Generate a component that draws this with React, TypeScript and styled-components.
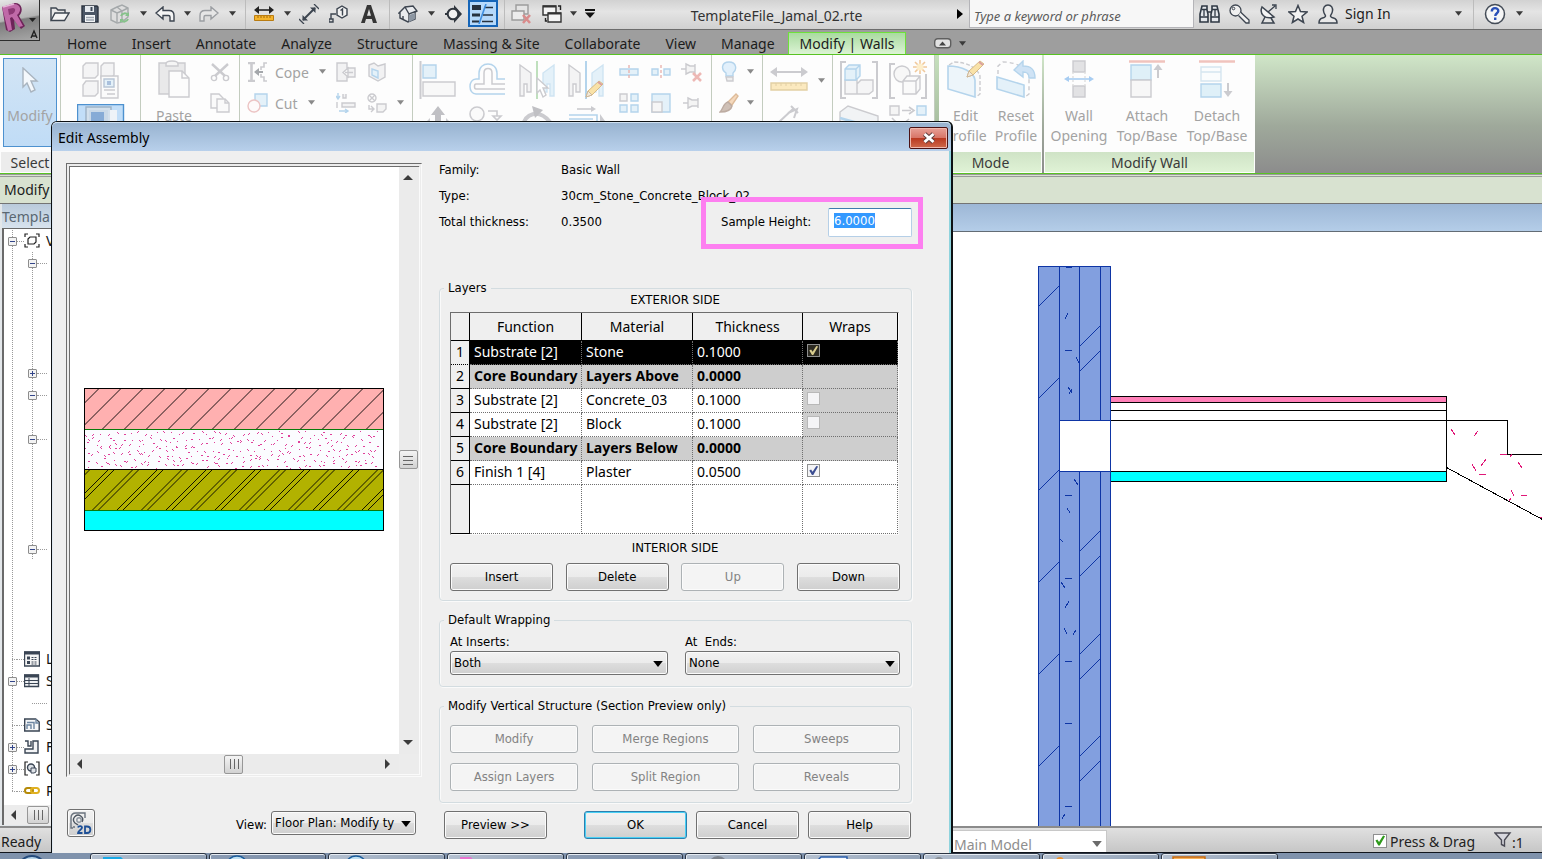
import React, { useEffect, useRef } from "react";
import styled, { createGlobalStyle } from "styled-components";

const ui = '"Noto Sans", "Open Sans", sans-serif';
const dialogFont = '"DejaVu Sans Condensed", "DejaVu Sans", sans-serif';

const GlobalStyle = createGlobalStyle`
  *, *::before, *::after { box-sizing: border-box; }
  body { margin: 0; background: #fff; overflow: hidden; }
  button, input, select { font: inherit; color: inherit; }
  svg { display: block; flex: none; }
`;

const Page = styled.div`
  position: relative;
  display: flex;
  flex-direction: column;
  height: 100vh;
  overflow: hidden;
  font: 14px/20px ${ui};
  color: #1c1c1c;
`;

/* ---------- quick access bar ---------- */

const QuickBar = styled.header`
  display: flex;
  align-items: center;
  height: 30px;
  flex: none;
  padding-left: 44px;
  background: linear-gradient(#d2d2d2, #e4e4e4 40%, #d0d0d0);
  border-bottom: 1px solid #6c6c6c;
`;

const AppButton = styled.button`
  position: absolute;
  left: 0;
  top: 0;
  z-index: 1;
  width: 40px;
  height: 41px;
  padding: 0;
  border: 1px solid #2e2e2e;
  border-width: 0 1px 1px 0;
  background: linear-gradient(170deg, #e6e6e6, #b4b4b4 46%, #7c7c7c 50%, #a8a8a8);
`;

const Slot = styled.button<{ $w: number }>`
  display: flex;
  align-items: center;
  justify-content: center;
  width: ${(p) => p.$w}px;
  height: 27px;
  flex: none;
  margin-bottom: 2px;
  padding: 0;
  border: 0;
  background: none;
`;

const ActiveSlot = styled(Slot)`
  margin: 0 2px 2px;
  background: #b5d9fb;
  border: 2px solid #1565b8;
`;

const Divider = styled.span<{ $w: number }>`
  width: ${(p) => p.$w}px;
  height: 29px;
  flex: none;
  background: linear-gradient(#bcbcbc, #bcbcbc) center / 1px 100% no-repeat;
`;

const FileName = styled.h1`
  flex: 1;
  margin: 0;
  padding-top: 2px;
  font: 14px/20px ${ui};
  text-align: center;
  color: #333;
`;

const Search = styled.input`
  width: 225px;
  height: 28px;
  margin-bottom: 2px;
  padding: 6px 4px 0;
  border: 1px solid #b4b4b8;
  border-top: 0;
  border-radius: 0;
  background: #f7f7f7;
  font: italic 13px/20px ${ui};
  &::placeholder { color: #5c5c5c; opacity: 1; }
`;

const SignIn = styled.button`
  display: flex;
  align-items: center;
  justify-content: space-between;
  width: 124px;
  margin: 0 4px 2px 0;
  padding: 0 5px 0 2px;
  border: 0;
  background: none;
`;

/* ---------- tabs ---------- */

const TabStrip = styled.nav`
  display: flex;
  align-items: flex-end;
  height: 25px;
  flex: none;
  padding-left: 55px;
  background: #9e9e9e;
  border-bottom: 1px solid #58c322;
`;

const Tab = styled.button<{ $active?: boolean }>`
  height: 22px;
  padding: ${(p) => (p.$active ? "0 11px" : "2px 13px 0 12px")};
  border: ${(p) => (p.$active ? "1px solid #6fe03a" : "0")};
  border-bottom: 0;
  background: ${(p) => (p.$active ? "linear-gradient(#a9dba0, #dcf3d4)" : "none")};
  line-height: 20px;
  white-space: nowrap;
`;

const TabToggle = styled.button`
  display: flex;
  align-items: center;
  gap: 7px;
  height: 22px;
  margin-left: 28px;
  padding: 0;
  border: 0;
  background: none;
`;

/* ---------- ribbon ---------- */

const Ribbon = styled.section`
  display: flex;
  height: 119px;
  flex: none;
  background: linear-gradient(#d0e6c8, #9fa99b 60%, #8c8c8c);
  border-bottom: 1px solid #58c322;
`;

const Panel = styled.div<{ $w: number; $contextual?: boolean }>`
  display: flex;
  flex-direction: column;
  width: ${(p) => p.$w}px;
  flex: none;
  margin-right: ${(p) => (p.$contextual ? 2 : 0)}px;
  background: #fdfdfd;
  border-right: ${(p) => (p.$contextual ? "0" : "1px solid #c3ccbf")};
`;

const PanelTools = styled.div`
  display: flex;
  flex: 1;
  padding: 1px 1px 0;
`;

const PanelTitle = styled.div<{ $green?: boolean }>`
  height: 20px;
  margin: 0 1px 1px;
  text-align: center;
  line-height: 22px;
  color: #3a3a3a;
  background: ${(p) => (p.$green ? "linear-gradient(#cfe3c6, #dff2d5)" : "#ececec")};
`;

const BigStack = styled.div<{ $w: number }>`
  display: flex;
  flex-direction: column;
  width: ${(p) => p.$w}px;
  flex: none;
`;

const BigTool = styled.button`
  display: flex;
  align-items: center;
  justify-content: center;
  height: 48px;
  flex: none;
  padding: 0;
  border: 0;
  background: none;
  & + & { align-items: flex-start; }
`;

const LabelledTool = styled.button<{ $w: number }>`
  display: flex;
  flex-direction: column;
  align-items: center;
  justify-content: flex-start;
  width: ${(p) => p.$w}px;
  flex: none;
  padding: 0;
  border: 0;
  background: none;
  color: #a3a3a3;
  line-height: 20px;
  white-space: pre-line;
  & > svg { margin: 4px 0 8px; }
`;

const ModifyTool = styled(LabelledTool)`
  height: 89px;
  margin: 2px 0 0 2px;
  border: 1px solid #4d91cf;
  background: linear-gradient(#d3e5f5, #c0dcf6);
  & > svg { margin: 8px 0 13px; }
`;

const SmallStack = styled.div<{ $w: number }>`
  display: flex;
  flex-direction: column;
  width: ${(p) => p.$w}px;
  flex: none;
`;

const SmallTool = styled.button<{ $start?: boolean }>`
  display: flex;
  align-items: center;
  justify-content: ${(p) => (p.$start ? "flex-start" : "center")};
  gap: 6px;
  height: 31px;
  padding: 0 0 0 ${(p) => (p.$start ? 6 : 0)}px;
  border: 0;
  background: none;
  color: #a3a3a3;
  & > span { padding: 2px 4px 0 0; }
`;

const ContextEdge = styled.div`
  width: 4px;
  flex: none;
  background: linear-gradient(#c6e0bd, #93a78c);
`;

const OptionsBar = styled.div`
  height: 30px;
  flex: none;
  padding: 1px 4px 0;
  border-top: 3px double #9a9a9a;
  border-bottom: 1px solid #747474;
  background: #d8e2d0;
  line-height: 24px;
`;

/* ---------- workspace ---------- */

const Workspace = styled.div`
  display: flex;
  flex: 1;
  min-height: 0;
`;

const Browser = styled.aside`
  display: flex;
  flex-direction: column;
  width: 60px;
  flex: none;
  overflow: hidden;
  padding-left: 2px;
  background: #e3e7ea;
`;

const BrowserTitle = styled.div`
  height: 24px;
  flex: none;
  line-height: 26px;
  color: #5a6772;
  background: linear-gradient(#b9cadb, #d8e3ee);
`;

const Tree = styled.ul`
  flex: 1;
  min-height: 0;
  overflow: hidden;
  margin: 0;
  padding: 1px 0 0;
  list-style: none;
  background: #fff;
  border: solid #6a6a6a;
  border-width: 1px 0 0 2px;
`;

const TreeRow = styled.li<{ $guide: boolean; $last?: boolean }>`
  display: flex;
  align-items: center;
  height: 22px;
  white-space: nowrap;
  color: #111;
  background:
    repeating-linear-gradient(#9a9a9a 0 1px, transparent 1px 2px) 8px 0 / 1px ${(p) => (p.$last ? "50%" : "100%")} no-repeat,
    repeating-linear-gradient(#9a9a9a 0 1px, transparent 1px 2px) 28px 0 / ${(p) => (p.$guide ? "1px" : "0")} 100% no-repeat;
`;

const Twist = styled.button<{ $open?: boolean }>`
  width: 9px;
  height: 9px;
  flex: none;
  padding: 0;
  border: 1px solid #8d8d8d;
  border-radius: 1px;
  background:
    linear-gradient(#34468a, #34468a) center / 5px 1px no-repeat,
    linear-gradient(#34468a, #34468a) center / ${(p) => (p.$open ? "0 0" : "1px 5px")} no-repeat,
    #f3f3f3;
`;

const Dots = styled.span<{ $w: number; $indent?: number }>`
  width: ${(p) => p.$w}px;
  flex: none;
  margin-left: ${(p) => p.$indent ?? 0}px;
  border-top: 1px dotted #9a9a9a;
`;

const Gap = styled.span<{ $w: number }>`
  width: ${(p) => p.$w}px;
  flex: none;
`;

const NodeLabel = styled.span`
  margin-left: 6px;
`;

const BrowserScroll = styled.div`
  display: flex;
  align-items: center;
  height: 20px;
  flex: none;
  margin-bottom: 1px;
  padding-left: 6px;
  gap: 9px;
  background: #ececec;
  border-left: 2px solid #6a6a6a;
`;

const Thumb = styled.span<{ $w: number; $h: number }>`
  display: flex;
  align-items: center;
  justify-content: center;
  width: ${(p) => p.$w}px;
  height: ${(p) => p.$h}px;
  flex: none;
  border: 1px solid #979797;
  border-radius: 2px;
  background: linear-gradient(#f4f4f4, #d2d2d2);
`;

const DocumentArea = styled.main`
  display: flex;
  flex-direction: column;
  flex: 1;
  min-width: 0;
`;

const DocumentTitle = styled.div`
  height: 28px;
  flex: none;
  background: linear-gradient(#9db7d6, #b4cde8);
  border-bottom: 1px solid #636c75;
`;

const Canvas = styled.div`
  flex: 1;
  min-height: 0;
  overflow: hidden;
  background: #fff;
`;

/* ---------- status bar and taskbar ---------- */

const StatusBar = styled.footer`
  display: flex;
  align-items: center;
  height: 26px;
  flex: none;
  border-top: 2px solid #8b8b8b;
  background: linear-gradient(#e0e0e0, #c6c6c6);
`;

const Ready = styled.span`
  width: 944px;
  padding: 4px 0 0 1px;
`;

const ModelPicker = styled.div`
  position: relative;
  width: 163px;
  height: 22px;
  align-self: flex-end;
  & > svg { position: absolute; right: 5px; top: 11px; }
`;

const ModelSelect = styled.select`
  appearance: none;
  display: block;
  width: 100%;
  height: 22px;
  padding: 4px 0 0 9px;
  border: 1px solid #c8c8c8;
  border-bottom: 0;
  border-radius: 0;
  background: #fff;
  color: #8e8e8e;
  opacity: 1;
`;

const DragOption = styled.label`
  display: flex;
  align-items: center;
  gap: 3px;
  margin-left: auto;
  padding-top: 3px;
  color: #222;
`;

const FilterCount = styled.button`
  display: flex;
  align-items: center;
  width: 48px;
  margin-left: 19px;
  padding: 0;
  border: 0;
  background: none;
  & > span { padding-top: 6px; }
`;

const Taskbar = styled.div`
  position: relative;
  display: flex;
  height: 7px;
  flex: none;
  gap: 2px;
  padding-left: 90px;
  overflow: hidden;
  border-top: 1px solid #10141c;
  background: #7f92ac;
`;

const TaskButton = styled.button<{ $shade: string }>`
  display: flex;
  width: 117px;
  height: 30px;
  flex: none;
  padding: 0 0 0 10px;
  border: 1px solid #2b3442;
  border-radius: 3px;
  background: ${(p) => p.$shade};
  box-shadow: inset 0 1px #e6ecf3, inset 1px 0 #e6ecf3;
`;

const StartOrb = styled.button`
  position: absolute;
  left: 17px;
  top: 2px;
  width: 30px;
  height: 30px;
  padding: 0;
  border: 2px solid #254b7d;
  border-radius: 50%;
  background: #b9d6ea;
`;

/* ---------- dialog ---------- */

const Dialog = styled.section`
  position: absolute;
  left: 51px;
  top: 121px;
  z-index: 2;
  width: 902px;
  border: 1px solid #0d1114;
  border-right-width: 2px;
  border-bottom: 0;
  border-radius: 6px 6px 0 0;
  background: #efefef;
  box-shadow: inset 1px 0 #dfe8f0, inset -2px 0 #8fd3dd;
  font: 13px/16px ${dialogFont};
  color: #000;
`;

const DialogTitle = styled.div`
  display: flex;
  align-items: center;
  justify-content: space-between;
  height: 29px;
  padding: 2px 3px 0 6px;
  border-top: 1px solid #cfe0f0;
  border-radius: 5px 5px 0 0;
  background: linear-gradient(#98b3d0, #b8d0eb);
`;

const DialogName = styled.h2`
  margin: 0;
  font: 14px/20px ${ui};
`;

const CloseButton = styled.button`
  display: flex;
  align-items: center;
  justify-content: center;
  width: 39px;
  height: 22px;
  padding: 0;
  border: 1px solid #4c1214;
  border-radius: 2px;
  background: linear-gradient(#e8a097, #d87668 48%, #b9371f 50%, #cf6a4c);
  box-shadow: inset 0 0 0 1px #f0b8ae;
`;

const DialogBody = styled.form`
  display: grid;
  grid-template-columns: 356px 473px;
  column-gap: 17px;
  padding: 12px 0 14px 14px;
`;

const PreviewColumn = styled.div`
  display: flex;
  flex-direction: column;
`;

const PreviewFrame = styled.div`
  display: grid;
  grid-template-columns: 1fr 20px;
  grid-template-rows: 1fr 20px;
  flex: 1;
  border-style: double;
  border-width: 4px 3px 3px 4px;
  border-color: #6d6d6d #fafafa #fafafa #6d6d6d;
  background: #ececec;
`;

const PreviewArea = styled.div`
  overflow: hidden;
  background: #fff;
`;

const VScroll = styled.div`
  display: flex;
  flex-direction: column;
  align-items: center;
  justify-content: space-between;
  padding: 6px 2px 8px 0;
  background: #ebebeb;
`;

const HScroll = styled.div`
  display: flex;
  align-items: center;
  justify-content: space-between;
  padding: 0 8px 0 6px;
  background: #ebebeb;
`;

const PreviewFooter = styled.div`
  display: flex;
  align-items: center;
  height: 28px;
  margin: 32px 6px 2px 1px;
`;

const ViewLabel = styled.label`
  margin: 4px 4px 0 auto;
`;

const Details = styled.div`
  display: flex;
  flex-direction: column;
`;

const Info = styled.div`
  display: grid;
  grid-template-columns: 122px minmax(0, 1fr) auto;
  grid-auto-rows: 26px;
  align-items: center;
  margin: -6px 0 49px;
`;

const InfoValue = styled.span`
  grid-column: 2;
  white-space: nowrap;
`;

const SampleField = styled.div`
  position: relative;
  display: flex;
  align-items: center;
  justify-content: space-between;
  width: 191px;
  &::after {
    content: "";
    position: absolute;
    inset: -11px -11px -12px -20px;
    border: 5px solid #fd7ff0;
    pointer-events: none;
  }
`;

const SampleInput = styled.input`
  width: 84px;
  height: 29px;
  padding: 0 5px 4px;
  border: 1px solid #b5cfe7;
  border-top-color: #3d7bad;
  border-radius: 2px;
  background: #fff;
  outline: 0;
  &::selection { background: #3399ff; color: #fff; }
`;

const Group = styled.fieldset`
  min-width: 0;
  margin: 0;
  padding: 0 11px 9px 10px;
  border: 1px solid #d3dce0;
  border-radius: 4px;
  box-shadow: inset 1px 0 #fafafa, 1px 1px #fafafa;
`;

const LowerGroup = styled(Group)`
  margin-top: 15px;
  padding-bottom: 11px;
`;

const Legend = styled.legend`
  margin-left: -6px;
  padding: 0 4px;
  line-height: 8px;
`;

const SideLabel = styled.div`
  text-align: center;
`;

const LayerTable = styled.table`
  width: 449px;
  margin: 4px 0 5px;
  border-collapse: separate;
  border-spacing: 0;
  table-layout: fixed;
  border: 1px solid #fafafa;
  border-top-color: #6d6d6d;
  border-left-color: #6d6d6d;
  font: 14px/20px ${ui};
  white-space: nowrap;
  background: #fff;
`;

const HeadCell = styled.th`
  height: 28px;
  padding: 0;
  border: solid #000;
  border-width: 0 1px 1px 0;
  background: #efefef;
  font-weight: 400;
  text-align: center;
`;

const NumberCell = styled.th<{ $current?: boolean }>`
  height: 24px;
  padding: 0 0 2px;
  border: solid #000;
  border-width: 0 1px 1px 0;
  border-bottom-style: ${(p) => (p.$current ? "dotted" : "solid")};
  background: #efefef;
  font-weight: 400;
`;

const FillerHead = styled(NumberCell)`
  height: 49px;
`;

type Tone = "selected" | "core" | "plain";
const cellFill: Record<Tone, string> = { selected: "#000", core: "#cecece", plain: "#fff" };

const Cell = styled.td<{ $tone: Tone }>`
  padding: 0 0 2px 4px;
  border: dotted #6f6f6f;
  border-width: 0 1px 1px 0;
  background: ${(p) => cellFill[p.$tone]};
  color: ${(p) => (p.$tone === "selected" ? "#fff" : "#000")};
  font-weight: ${(p) => (p.$tone === "core" ? 700 : 400)};
`;

const Check = styled.input<{ $accent: string; $fill: string; $size?: number }>`
  appearance: none;
  display: block;
  width: ${(p) => p.$size ?? 13}px;
  height: ${(p) => p.$size ?? 13}px;
  margin: 0 0 2px;
  border: 1px solid #8e8f8f;
  background: ${(p) => p.$fill};
  &:disabled { border-color: #b8b8b8; }
  &:checked::after {
    content: "";
    display: block;
    width: 100%;
    height: 100%;
    background: ${(p) => p.$accent};
    clip-path: polygon(12% 50%, 28% 42%, 42% 62%, 76% 8%, 92% 14%, 48% 92%, 36% 92%);
  }
`;

const ButtonRow = styled.div`
  display: flex;
  justify-content: space-between;
  margin-top: 7px;
`;

const PushButton = styled.button<{ $w?: number; $primary?: boolean }>`
  width: ${(p) => p.$w ?? 103}px;
  height: 28px;
  padding: 0;
  border: 1px solid ${(p) => (p.$primary ? "#2c7fae" : "#707070")};
  border-radius: 3px;
  background: linear-gradient(#f2f2f2, #ebebeb 50%, #dddddd 52%, #cfcfcf);
  box-shadow: inset 0 0 0 1px ${(p) => (p.$primary ? "#48d0f5" : "#fbfbfb")};
  &:disabled {
    border-color: #adb2b5;
    background: #f4f4f4;
    color: #838383;
  }
`;

const CornerButton = styled(PushButton)`
  display: flex;
  align-items: center;
  justify-content: center;
`;

const Picker = styled.div<{ $w: number }>`
  position: relative;
  width: ${(p) => p.$w}px;
  & > svg { position: absolute; right: 5px; top: 10px; pointer-events: none; }
`;

const PickerSelect = styled.select`
  appearance: none;
  display: block;
  width: 100%;
  height: 24px;
  padding: 0 18px 0 3px;
  border: 1px solid #707070;
  border-radius: 3px;
  background: linear-gradient(#f2f2f2, #ebebeb 50%, #dddddd 52%, #cfcfcf);
  box-shadow: inset 0 0 0 1px #fbfbfb;
`;

const WrapRow = styled.div`
  display: flex;
  justify-content: space-between;
  padding-top: 10px;
`;

const Field = styled.div`
  display: flex;
  flex-direction: column;
  gap: 1px;
  & > label { white-space: pre; }
`;

const VerticalGrid = styled.div`
  display: grid;
  grid-template-columns: 128px 147px 147px;
  gap: 10px 14px;
  padding-top: 15px;
`;

const Actions = styled.div`
  display: flex;
  gap: 9px;
  margin: 8px 1px 0 5px;
  & > :first-child { margin-right: auto; }
`;

/* ---------- drawings ---------- */

type ArtProps = { w: number; h: number; children?: React.ReactNode };
const Art = ({ w, h, children }: ArtProps) => (
  <svg width={w} height={h} viewBox={`0 0 ${w} ${h}`} fill="none" strokeWidth="1.4" aria-hidden="true">
    {children}
  </svg>
);

const Caret = ({ size = 7, color = "#3a3a3a" }: { size?: number; color?: string }) => (
  <svg width={size} height={Math.ceil(size / 2) + 1} viewBox="0 0 8 5" aria-hidden="true">
    <path d="M0 0h8L4 5z" fill={color} />
  </svg>
);

const Arrow = ({ dir }: { dir: "up" | "down" | "left" | "right" }) => {
  const d = { up: "M0 7L5 2L10 7z", down: "M0 2h10L5 7z", left: "M6 0v10L1 5z", right: "M2 0v10L7 5z" }[dir];
  const wide = dir === "up" || dir === "down";
  return (
    <svg width={wide ? 10 : 8} height={wide ? 8 : 10} viewBox={wide ? "0 0 10 8" : "0 0 8 10"} aria-hidden="true">
      <path d={d} fill="#3c3c3c" />
    </svg>
  );
};

const line = "#3d4550";
const quickIcons = {
  open: (
    <Art w={20} h={16}>
      <path d="M1 14V2h5l2 2h7v3" fill="#e8e8e8" stroke={line} />
      <path d="M1 14.500L5 7h14l-4.500 7.500z" fill="#f4f4f4" stroke={line} />
    </Art>
  ),
  save: (
    <Art w={18} h={18}>
      <path d="M1 1h15l1 1v15H1z" fill="#4b5666" stroke="#2c3440" />
      <path d="M4 1h9v6H4z" fill="#e5e9ee" />
      <path d="M9.500 2h2v4h-2z" fill="#3f4a5a" />
      <path d="M4 10h10v7H4z" fill="#f3f5f7" />
      <path d="M5 12.500h8M5 15h8" stroke="#a0a8b2" />
    </Art>
  ),
  sync: (
    <Art w={22} h={20}>
      <path d="M2 6l6-3 5-2 6 3v9l-6 5-5 1-6-3z" fill="#dedede" stroke="#a5a9ab" />
      <path d="M2 6l6 3 5-2 6-3M8 9v9M13 7v9M8 3l5 4" stroke="#a5a9ab" />
      <path d="M12 12a4 4 0 017-1M19 15a4 4 0 01-7 1" stroke="#86c28a" strokeWidth="2" />
      <path d="M20 8v4h-4zM11 19v-4h4z" fill="#86c28a" />
    </Art>
  ),
  undo: (
    <Art w={20} h={16}>
      <path d="M1 7l7-6v3.500h6c3 0 5 2 5 5V15h-4v-4c0-1-.5-1.500-1.500-1.500H8V13z" fill="#f4f4f4" stroke={line} />
    </Art>
  ),
  redo: (
    <Art w={20} h={16}>
      <path d="M19 7l-7-6v3.500H6c-3 0-5 2-5 5V15h4v-4c0-1 .5-1.500 1.500-1.500H12V13z" fill="#e6e6e6" stroke="#9b9ea2" />
    </Art>
  ),
  measure: (
    <Art w={20} h={16}>
      <path d="M2 4h16" stroke="#222" strokeWidth="1.600" />
      <path d="M0 4l5-4v8zM20 4l-5-4v8z" fill="#222" />
      <path d="M.5 9.500h19v5H.5z" fill="#f4b42c" stroke="#b97c12" strokeWidth="1" />
      <path d="M4 10v2M7 10v2M10 10v2M13 10v2M16 10v2" stroke="#a46a08" strokeWidth="1" />
    </Art>
  ),
  dimension: (
    <Art w={20} h={20}>
      <path d="M4 16L16 4" stroke={line} strokeWidth="2" />
      <path d="M3.500 11v5.500H9zM16.500 9V3.500H11z" fill={line} />
      <path d="M0 15l5 5M15 0l5 5" stroke={line} strokeWidth="1.300" />
    </Art>
  ),
  tag: (
    <Art w={20} h={18}>
      <path d="M2 14V9h5M0 14h4v3H0z" stroke={line} />
      <path d="M13 1l5 3v6l-5 3-5-3V4z" fill="#f2f2f2" stroke={line} />
      <path d="M11.500 5.500l2-1.500v6.500" stroke={line} />
    </Art>
  ),
  textTool: (
    <Art w={16} h={18}>
      <path d="M0 18L6 0h4l6 18h-4l-1.200-4H5L3.800 18zM6 10.800h4L8 4z" fill="#353535" fillRule="evenodd" />
    </Art>
  ),
  house: (
    <Art w={20} h={18}>
      <path d="M2 8v5l8 4 7-3V7l2-1-4-5-8 1-6 6z" fill="#e9ebee" stroke={line} />
      <path d="M7 2l4 7 8-3M11 9v8M5 11v3" stroke={line} />
      <path d="M11 10l6-2v6l-6 3z" fill="#8c96a2" />
    </Art>
  ),
  section: (
    <Art w={18} h={18}>
      <path d="M9 0l8 9-8 9z" fill="#30363e" />
      <circle cx="8" cy="9" r="5.300" fill="#f1f1f1" stroke="#30363e" strokeWidth="2" />
      <path d="M0 9h2" stroke="#30363e" strokeWidth="2" />
    </Art>
  ),
  thinLines: (
    <Art w={22} h={20}>
      <path d="M0 3.500h9" stroke="#26323f" strokeWidth="5" />
      <path d="M0 11h8" stroke="#26323f" strokeWidth="3" />
      <path d="M0 17.500h7" stroke="#26323f" strokeWidth="2" />
      <path d="M12 3.500h9M11 11h10M10 17.500h11" stroke="#26323f" strokeWidth="1.300" />
      <path d="M14 0L7 20" stroke="#3d8ee0" strokeWidth="1.600" />
    </Art>
  ),
  closeHidden: (
    <Art w={22} h={20}>
      <path d="M5 1h12v9H5z" fill="#e4e4e4" stroke="#9c9c9c" />
      <path d="M1 7h12v9H1z" fill="#ececec" stroke="#9c9c9c" />
      <path d="M12 11l7 8M19 11l-7 8" stroke="#d98c8c" strokeWidth="2.600" />
    </Art>
  ),
  switchWindows: (
    <Art w={20} h={20}>
      <path d="M1 2h13v9H1z" fill="#f5f5f5" stroke="#333" />
      <path d="M1 2.500h13" stroke="#333" strokeWidth="2" />
      <path d="M6 9h13v9H6z" fill="#f5f5f5" stroke="#333" />
      <path d="M6 9.500h13" stroke="#333" strokeWidth="2" />
      <path d="M16 2h2.500v4M3.500 14v3H5" stroke="#222" />
    </Art>
  ),
  customize: (
    <Art w={10} h={9}>
      <path d="M0 1h10" stroke="#111" strokeWidth="2" />
      <path d="M0 3.500h10L5 9z" fill="#111" />
    </Art>
  ),
  searchToggle: (
    <Art w={7} h={10}>
      <path d="M0 0v10l6-5z" fill="#000" />
    </Art>
  ),
  binoculars: (
    <Art w={21} h={20}>
      <path d="M3 2h5v4l1 4v8H1v-8zM18 2h-5v4l-1 4v8h8v-8z" fill="#e4e7eb" stroke="#2f3844" strokeWidth="1.600" />
      <path d="M1 13h8M12 13h8M9 8h3M3 5.500h5M13 5.500h5M5 6v6M16 6v6" stroke="#2f3844" strokeWidth="1.300" />
    </Art>
  ),
  key: (
    <Art w={21} h={20}>
      <circle cx="6.500" cy="6.500" r="5.500" fill="#f0f0f0" stroke={line} strokeWidth="1.300" />
      <circle cx="4.500" cy="4.500" r="1.300" stroke={line} strokeWidth="1" />
      <path d="M9.500 11.500l7.500 7.500h3v-3L11.500 8" fill="#f0f0f0" stroke={line} strokeWidth="1.300" />
    </Art>
  ),
  dish: (
    <Art w={18} h={20}>
      <path d="M5 13l-3 6h12l-3-5" fill="#e3e3e3" stroke={line} strokeWidth="1.500" />
      <path d="M2 3c-3 7 3 13 12 10z" fill="#f4f4f4" stroke={line} strokeWidth="1.500" />
      <path d="M8 8l7-6M12 1h4v4" stroke={line} strokeWidth="1.300" />
    </Art>
  ),
  star: (
    <Art w={20} h={20}>
      <path d="M10 1.500l2.500 6 6.500.5-5 4.200 1.600 6.300L10 15l-5.600 3.500L6 12.200 1 8l6.500-.5z" fill="#f4f4f4" stroke={line} strokeWidth="1.500" />
    </Art>
  ),
  person: (
    <Art w={20} h={20}>
      <path d="M10 1c3.500 0 5 3 4.500 6s-2 4-2 5 1 1.500 3 2 3.500 2 3.500 5H1c0-3 1.500-4.500 3.500-5s3-1 3-2-1.500-2-2-5S6.500 1 10 1z" fill="#e9e9e9" stroke={line} strokeWidth="1.500" />
    </Art>
  ),
  help: (
    <Art w={22} h={22}>
      <circle cx="11" cy="11" r="9.500" fill="#f6f6f6" stroke="#444c57" strokeWidth="1.500" />
      <path d="M7.800 8.500c0-4.500 6.500-4.200 6.500-.5 0 2.200-3 2.400-3 5M11.200 14.500v2.500" stroke="#2a50b8" strokeWidth="2.400" />
    </Art>
  ),
};

const grey = "#cbcbcf";
const blue = "#b4d4ec";
const paleBlue = "#e4f1f9";
const Pencil = ({ x, y }: { x: number; y: number }) => (
  <g transform={`translate(${x} ${y})`}>
    <path d="M0 16l2-6L13 0l4 3L6 14z" fill="#f9e2a8" stroke="#d8bb85" strokeWidth="1" />
    <path d="M0 16l2-6 4 4z" fill="#f4ead8" stroke="#cdb79a" strokeWidth="1" />
    <path d="M12 1l4 3" stroke="#dba0a0" strokeWidth="2" />
  </g>
);

const ribbonIcons = {
  cursor: (
    <Art w={17} h={26}>
      <path d="M1 1l14 13H9l4 9-4 2-4-9-4 4z" fill="#f4f8fc" stroke="#a9b4bf" />
    </Art>
  ),
  families: (
    <Art w={40} h={38}>
      <path d="M2 5l3-3h12v12l-3 3H2zM20 5l3-3h10v12l-3 3H20zM2 24l3-4h12v12l-3 3H2z" fill="#f4f4f5" stroke={grey} />
      <path d="M20 15h17v22H20z" fill="#fbfbfb" stroke={grey} />
      <path d="M23 18h10v8H23z" fill={paleBlue} stroke="#b9c6d6" />
      <path d="M26 20h4v4h-4z" fill="#a9c0dd" />
      <path d="M23 29h11M26 33h8" stroke={grey} />
    </Art>
  ),
  properties: (
    <Art w={48} h={48}>
      <path d="M.5.5h46V48H.5z" fill="#c2def8" stroke="#4d91cf" />
      <path d="M9 3h25v45H9z" fill="#d3e0ec" stroke="#9db2c6" />
      <path d="M12 6h19v42H12z" fill="#c9d9e8" />
      <path d="M14 8h13v40H14z" fill="#86abd6" />
      <path d="M33 6h7v42h-7z" fill="#eef3f8" />
    </Art>
  ),
  paste: (
    <Art w={32} h={38}>
      <path d="M1 3h26v31H1z" fill="#e9e9ea" stroke={grey} />
      <path d="M8 4c0-3 3-3 6-3s6 0 6 3v2H8z" fill="#f5f5f5" stroke={grey} />
      <path d="M11 11h13l7 7v19H11z" fill="#fcfcfc" stroke={grey} />
      <path d="M24 11v7h7" stroke={grey} />
    </Art>
  ),
  scissors: (
    <Art w={20} h={20}>
      <path d="M2 2l13 12M18 2L5 14" stroke={grey} strokeWidth="2.400" />
      <circle cx="4" cy="16" r="2.600" stroke={grey} />
      <circle cx="16" cy="16" r="2.600" stroke={grey} />
    </Art>
  ),
  copy: (
    <Art w={20} h={20}>
      <path d="M1 1h8l4 4v10H1z" fill="#fafafa" stroke={grey} />
      <path d="M7 6h8l4 4v9H7z" fill="#fafafa" stroke={grey} />
      <path d="M15 6v4h4" stroke={grey} />
    </Art>
  ),
  cope: (
    <Art w={22} h={20}>
      <path d="M1 1h7M1 19h7M4.500 1v18" stroke={grey} strokeWidth="2.600" />
      <path d="M20 1h-3v4h-3v3M20 19h-3v-4h-3v-3" stroke={grey} strokeWidth="1.600" />
      <path d="M16 10H9" stroke="#a4a7ab" strokeWidth="2" />
      <path d="M7 10l5-4v8z" fill="#a4a7ab" />
    </Art>
  ),
  cut: (
    <Art w={22} h={20}>
      <path d="M8 1h12v12H8z" fill={paleBlue} stroke={blue} />
      <circle cx="7" cy="13" r="6" fill="#fdfafa" stroke="#ecc4c4" />
    </Art>
  ),
  joinEnd: (
    <Art w={20} h={20}>
      <path d="M1 1h10v5h8v9h-8v4H1z" fill="#f2f2f3" stroke={grey} />
      <path d="M17 10.500H9M12 6l-5 4.500 5 4.500z" fill="#fff" stroke={grey} />
    </Art>
  ),
  wallJoin: (
    <Art w={18} h={20}>
      <path d="M1 3l5-2 4 3 7-2v13l-7 4-9-5z" fill="#f2f2f3" stroke={grey} />
      <path d="M4 7l6 2v7l-6-3z" fill={paleBlue} stroke={blue} />
    </Art>
  ),
  beamJoin: (
    <Art w={20} h={20}>
      <path d="M2 0v5M0 3l2 3 2-3" stroke={blue} />
      <path d="M7 1v4h3V1M6 10h13v4H6zM1 9v6" fill="#f2f2f3" stroke={grey} />
      <path d="M3 18h9M9 16l3 2-3 2" stroke={blue} />
    </Art>
  ),
  splitFace: (
    <Art w={20} h={20}>
      <circle cx="5" cy="5" r="4" stroke={grey} />
      <path d="M2 8l6-6M2 2l6 6M2 12v4h4M4 13l3 3-3 3" stroke={grey} />
      <path d="M10 11h9v5l-3 3h-6z" fill="#f4f4f4" stroke={grey} />
    </Art>
  ),
  align: (
    <Art w={38} h={40}>
      <path d="M1.500 1v38" stroke={grey} strokeWidth="2" />
      <path d="M4 5h13v13H4z" fill={paleBlue} stroke={blue} />
      <path d="M4 22h32v14H4z" fill="#f8f8f8" stroke={grey} />
    </Art>
  ),
  offset: (
    <Art w={38} h={34}>
      <path d="M37 16h-8V10c0-12-18-12-18 0v6H8c-8 0-8 15 0 15h29" stroke={blue} strokeWidth="1.500" />
      <path d="M37 21h-13V10c0-6-8-6-8 0v11H8c-2 0-2 5 0 5h29" stroke={grey} strokeWidth="1.500" />
    </Art>
  ),
  mirrorPick: (
    <Art w={36} h={40}>
      <path d="M18 1v38" stroke="#bfe0bd" strokeWidth="2" />
      <path d="M1 5l11 8v19H8v-8H5v12H1z" fill="#f3f3f4" stroke={grey} />
      <path d="M35 5l-11 8v19h4v-8h3v12h4z" fill={paleBlue} stroke="#cfe4f2" />
      <path d="M18 18l11 10h-5l3 7-3 2-3-7-3 3z" fill="#fff" stroke={grey} />
    </Art>
  ),
  mirrorDraw: (
    <Art w={38} h={40}>
      <path d="M18 1v38" stroke={blue} strokeWidth="2" />
      <path d="M1 5l11 8v19H8v-8H5v12H1z" fill="#f3f3f4" stroke={grey} />
      <path d="M35 5l-11 8v19h4v-8h3v12h4z" fill={paleBlue} stroke="#cfe4f2" />
      <Pencil x={18} y={21} />
    </Art>
  ),
  split: (
    <Art w={20} h={14}>
      <path d="M1 4h18v6H1z" fill={paleBlue} stroke={blue} />
      <path d="M10 0v14" stroke="#e8b3ae" strokeDasharray="3 2" />
    </Art>
  ),
  splitGap: (
    <Art w={20} h={14}>
      <path d="M1 4h6v6H1zM13 4h6v6h-6z" fill={paleBlue} stroke={blue} />
      <path d="M10 0v14" stroke="#e8b3ae" strokeDasharray="3 2" />
    </Art>
  ),
  unpin: (
    <Art w={22} h={20}>
      <path d="M0 7h5M5 2v10l4-2h5V4H9zM14 2v10" fill="#f4f4f4" stroke={grey} />
      <path d="M12 11l8 8M20 11l-8 8" stroke="#edb8b5" strokeWidth="2.600" />
    </Art>
  ),
  array: (
    <Art w={20} h={20}>
      <path d="M1 1h7v7H1z" fill="#f4f4f4" stroke={grey} />
      <path d="M12 1h7v7h-7zM1 12h7v7H1zM12 12h7v7h-7z" fill={paleBlue} stroke={blue} />
    </Art>
  ),
  scale: (
    <Art w={20} h={20}>
      <path d="M1 1h18v18H1z" fill={paleBlue} stroke={blue} />
      <path d="M1 9h10v10H1z" fill="#f6f6f6" stroke={grey} />
    </Art>
  ),
  pin: (
    <Art w={18} h={14}>
      <path d="M0 7h5M5 2v10l4-2h6V4H9zM15 2v10" fill="#f4f4f4" stroke={grey} />
    </Art>
  ),
  move: (
    <Art w={32} h={40}>
      <path d="M16 2l7 9h-4v8h-6v-8H9z" fill="#c0c0c4" />
      <path d="M2 20l6-6v12zM30 20l-6-6v12z" fill={grey} />
    </Art>
  ),
  copyMove: (
    <Art w={38} h={40}>
      <circle cx="9" cy="10" r="7" fill="#fafafa" stroke={grey} strokeWidth="1.600" />
      <path d="M20 7h9v5M25 12h8l-4 4z" stroke={grey} strokeWidth="1.600" />
    </Art>
  ),
  rotate: (
    <Art w={34} h={40}>
      <path d="M3 22C5 10 18 4 30 18" stroke={grey} strokeWidth="4" />
      <path d="M12 2l11 4-8 8z" fill="#c0c0c4" />
    </Art>
  ),
  trim: (
    <Art w={40} h={40}>
      <path d="M10 5h16" stroke={grey} strokeWidth="1.600" />
      <path d="M24 2l5 3-5 3z" fill={grey} />
      <path d="M2 11h28v8M2 15h24" stroke={blue} strokeWidth="1.600" />
      <path d="M33 10v12l5-5z" fill={grey} />
    </Art>
  ),
  bulb: (
    <Art w={16} h={22}>
      <path d="M8 1c8 0 8 8 4 11v3H5v-3C0 9 0 1 8 1z" fill="#e2f0fb" stroke={blue} />
      <path d="M5 16h7v4H6z" fill="#eee" stroke={grey} />
    </Art>
  ),
  brush: (
    <Art w={20} h={20}>
      <path d="M9 9l8-8 2 2-6 9z" fill="#f5d9bd" stroke="#ddbb99" />
      <path d="M9 9l4 4c-1 5-7 6-12 6 3-2 3-9 8-10z" fill="#cfc0b6" stroke="#bdaca2" />
    </Art>
  ),
  ruler: (
    <Art w={38} h={26}>
      <path d="M4 5h30" stroke={grey} strokeWidth="2" />
      <path d="M0 5l7-5v10zM38 5l-7-5v10z" fill={grey} />
      <path d="M1 16h36v7H1z" fill="#fbe9bf" stroke="#e2cfa4" />
      <path d="M6 16v3M11 16v3M16 16v3M21 16v3M26 16v3M31 16v3" stroke="#e2cfa4" strokeWidth="1" />
    </Art>
  ),
  alignedDim: (
    <Art w={24} h={40}>
      <path d="M2 18L16 5M14 2l7 7M11 9l9-4-3 9" stroke={grey} strokeWidth="2" />
    </Art>
  ),
  similar: (
    <Art w={40} h={40}>
      <path d="M7 2H2v36h5M33 2h5v36h-5" stroke={grey} strokeWidth="2" />
      <path d="M6 20h12v14H6zM18 24l4-4h12v11l-4 3H18z" fill="#f5f5f6" stroke={grey} />
      <path d="M6 9l4-4h11v11l-4 4H6zM6 9h11v11M17 9l4-4" fill={paleBlue} stroke={blue} />
    </Art>
  ),
  createGroup: (
    <Art w={40} h={40}>
      <path d="M7 4H2v34h5M33 38h5V14" stroke={grey} strokeWidth="2" />
      <circle cx="14" cy="14" r="8" fill="#f7f7f7" stroke={grey} />
      <path d="M15 21l4-5h13v13l-4 5H15zM15 21h13v13M28 21l4-5" fill="#fafafa" stroke={grey} />
      <path d="M32 0v14M25 7h14M27 2l10 10M37 2L27 12" stroke="#f0c89b" strokeWidth="1.600" />
      <circle cx="32" cy="7" r="3.500" fill="#fdeecb" />
    </Art>
  ),
  parts: (
    <Art w={42} h={40}>
      <path d="M2 8l8-6 30 10v10l-6 4L2 18z" fill="#f1f3f5" stroke={grey} />
      <path d="M2 14l32 9" stroke={blue} strokeWidth="2.400" />
    </Art>
  ),
  assembly: (
    <Art w={38} h={40}>
      <path d="M1 2h9v9H1z" fill="#f5f5f5" stroke={grey} />
      <path d="M28 2h9v9h-9z" fill={paleBlue} stroke={blue} />
      <path d="M13 6.500h9M20 3l5 3.500-5 3.500M3 14l4 4M20 15l-6 5" stroke={grey} strokeWidth="1.600" />
    </Art>
  ),
  editProfile: (
    <Art w={38} h={38}>
      <path d="M2 5l5-3c14 0 24 7 26 14v18l-4 3" fill="#fafafa" stroke={grey} strokeDasharray="4 2" />
      <path d="M1 6c14 0 26 6 27 14v17L1 29z" fill="#edf5fa" stroke={blue} strokeWidth="1.600" />
      <Pencil x={20} y={1} />
    </Art>
  ),
  resetProfile: (
    <Art w={40} h={38}>
      <path d="M2 14V6l5-4c14 0 24 7 26 14v18l-4 3" stroke={grey} strokeDasharray="4 3" />
      <path d="M1 17l27 8v12L1 29z" fill="#e4f1f9" stroke={blue} strokeWidth="1.600" />
      <path d="M18 10l9-9v5c8 0 12 3 12 12h-6c0-5-2-6-6-6v5z" fill="#cfe3f5" stroke={blue} />
    </Art>
  ),
  wallOpening: (
    <Art w={30} h={38}>
      <path d="M9 1h12v11H9zM9 26h12v11H9z" fill="#e2e2e4" stroke={grey} />
      <path d="M9 12v14M21 12v14" stroke="#dedede" strokeDasharray="2 2" />
      <path d="M4 19h22" stroke="#a8cdf2" strokeWidth="1.600" />
      <path d="M0 19l5-3v6zM30 19l-5-3v6z" fill="#a8cdf2" />
    </Art>
  ),
  attach: (
    <Art w={36} h={38}>
      <path d="M0 1.500h36" stroke="#f0c3bd" strokeWidth="2.600" />
      <path d="M2 5h20v15H2z" fill="#dff0f8" stroke={blue} />
      <path d="M2 20h20v17H2z" fill="#f7f7f7" stroke={grey} />
      <path d="M29 18V7" stroke={grey} strokeWidth="2" />
      <path d="M24.500 10L29 4l4.500 6z" fill={grey} />
    </Art>
  ),
  detach: (
    <Art w={36} h={38}>
      <path d="M0 1.500h36" stroke="#f0c3bd" strokeWidth="2.600" />
      <path d="M2 7h20v14H2zM2 12h20" fill="#fafcfd" stroke="#d5e5ef" />
      <path d="M2 24h20v13H2z" fill="#dff0f8" stroke={blue} />
      <path d="M29 23v10" stroke={grey} strokeWidth="2" />
      <path d="M24.500 31l4.500 6 4.500-6z" fill={grey} />
    </Art>
  ),
};

const treeIcons = {
  views: (
    <Art w={16} h={16}>
      <path d="M4 1H1v3M12 1h3v3M4 14H1v-3M12 14h3v-3" stroke="#222" strokeWidth="1.200" />
      <path d="M4 6l2-2h6v5l-2 2H4z" stroke="#222" strokeWidth="1.200" />
    </Art>
  ),
  legends: (
    <Art w={16} h={16}>
      <path d="M.5 1h15v14H.5z" fill="#f5f5f5" stroke="#3a4554" />
      <path d="M0 2h16" stroke="#3a4554" strokeWidth="3" />
      <path d="M3 5.500h3v3H3zM3 10h3v3H3z" fill="#3a4554" />
      <path d="M7.500 6.500h6M7.500 8.500h6M7.500 11h6M7.500 13h6" stroke="#3a4554" strokeDasharray="2 1" strokeWidth="1" />
    </Art>
  ),
  schedules: (
    <Art w={16} h={14}>
      <path d="M.5 1h14v11.500H.5z" fill="#f0f2f4" stroke="#3a4554" />
      <path d="M0 2h15" stroke="#3a4554" strokeWidth="3" />
      <path d="M1 6.500h14M1 9.500h14M5 4v9" stroke="#3a4554" strokeWidth="1" />
    </Art>
  ),
  sheets: (
    <Art w={16} h={14}>
      <path d="M.7 1h11l3.500 3v9H.7z" fill="#f5f6f7" stroke="#3a4554" />
      <path d="M3 11V7h4v4M3 4.500h7V11M12 1v4h3" stroke="#6d86a2" />
    </Art>
  ),
  families: (
    <Art w={16} h={14}>
      <path d="M1 1h3v5h3V1M9 1h5v12H1V9h8z" fill="#f3f4f6" stroke="#3a4554" />
    </Art>
  ),
  groups: (
    <Art w={16} h={16}>
      <path d="M4 1H1v13h3M12 1h3v13h-3" stroke="#222" strokeWidth="1.200" />
      <circle cx="7" cy="6.500" r="3.500" fill="#dfe3e8" stroke="#3a4554" />
      <path d="M7 7h5v4l-2 1H7z" fill="#dfe3e8" stroke="#3a4554" strokeWidth="1" />
    </Art>
  ),
  links: (
    <Art w={16} h={10}>
      <rect x="1" y="2" width="8" height="5" rx="2.500" stroke="#b58a08" strokeWidth="2" />
      <rect x="7" y="2" width="8" height="5" rx="2.500" stroke="#e0b020" strokeWidth="2" />
    </Art>
  ),
};

const hatch = (from: number, to: number, step: number) =>
  Array.from({ length: Math.ceil((to - from) / step) }, (_, i) => from + i * step);

/* Concrete speckle: short dashes scattered evenly over a jittered grid. */
const speckles = (() => {
  let seed = 7;
  const next = () => (seed = (seed * 16807) % 2147483647) / 2147483647;
  const marks: string[] = [];
  for (let row = 0; row < 7; row += 1) {
    for (let col = 0; col < 42; col += 1) {
      const x = 85 + Math.floor(col * 7 + next() * 6);
      const y = 431 + Math.floor(row * 5.400 + next() * 5);
      const kind = Math.floor(next() * 4);
      if (kind === 0) marks.push(`M${x} ${y}h2`);
      else if (kind === 1) marks.push(`M${x} ${y}h1M${x + 1} ${y + 1}h1`);
      else if (kind === 2) marks.push(`M${x} ${y}h1M${x - 1} ${y + 1}h1`);
      else marks.push(`M${x} ${y}h1`);
    }
  }
  return marks.join("");
})();

/* Plan preview of the compound wall, drawn in window coordinates. */
const WallPreview = () => (
  <svg width="329" height="560" viewBox="70 167 329 560" role="img" aria-label="Wall assembly preview">
    <clipPath id="stone"><path d="M84 388h300v41H84z" /></clipPath>
    <clipPath id="block"><path d="M84 470h300v40H84z" /></clipPath>
    <g shapeRendering="crispEdges">
      <path d="M84 388h300v41H84z" fill="#ffb0b0" />
      <path d="M84 429h300v40H84z" fill="#fbfcff" />
      <path d="M84 469h300v41H84z" fill="#b2b200" />
      <path d="M84 510h300v20H84z" fill="#00ffff" />
    </g>
    <path d={hatch(58, 384, 22).map((x) => `M${x} 429.500l42-42`).join("")} stroke="#000" strokeWidth=".9" clipPath="url(#stone)" />
    <path d={hatch(43, 384, 24.5).map((x) => `M${x} 510.500l42-42M${x + 6} 510.500l42-42`).join("")} stroke="#000" strokeWidth=".9" clipPath="url(#block)" />
    <g shapeRendering="crispEdges">
      <path d={speckles} transform="translate(0 .5)" stroke="#e0409a" />
      <path d="M84 429.500h300M84 510.500h300" stroke="#0a7a0a" />
      <path d="M84 469.500h300M84.500 388.500h299v142h-299z" stroke="#000" fill="none" />
    </g>
  </svg>
);

/* Section through the wall and slab, drawn in window coordinates. */
const SectionDrawing = () => (
  <svg width="1482" height="1200" viewBox="60 232 1482 1200" fill="none" shapeRendering="crispEdges" role="img" aria-label="Wall section">
    <path d="M1038.500 266.500h72V1500h-72z" fill="#829fdf" />
    <g stroke="#0e35a5">
      <path d="M1038.500 1500V266.500h72V1500M1059.500 266v1300M1079.500 266v1300M1100.500 266v1300" />
      <path d={hatch(306, 860, 92).map((y) => `M1039 ${y}l20-20`).join("")} />
      <path d={[346, 551, 654, 756].map((y) => `M1080 ${y}l20-20M1080 ${y + 25}l20-20`).join("")} />
      <path d="M1066 267.500h6M1065 319l3-6M1065 350.500h7M1076 357l3 6M1068 387l4 6M1072 389l-3 5M1074 479l4 6M1065 495.500h7M1067 508l3 5M1059 538l4 4M1065 578.500h7M1061 582l4 6M1065 608l4-7M1064 628l3 6M1073 635l3-5M1065 661.500h7M1065 723.500h7M1065 806.500h7M1062 819l3-5" />
    </g>
    <path d="M1059.500 420.500h51v51h-51z" fill="#fff" stroke="#0e35a5" />
    <path d="M1110 396.500h336v6h-336z" fill="#ff80b8" />
    <path d="M1110 471.500h336v10h-336z" fill="#00ffff" />
    <path d="M1111 396.500h335.500v85H1111M1111 402.500h335M1111 410.500h335M1111 420.500h396.500v34H1560M1111 471.500h335M1446.500 467.500L1560 529" stroke="#000" />
    <path d="M1110.500 396v25M1110.500 471v12" stroke="#0e35a5" />
    <path d="M1451 429l4 6M1474 436l4-5M1472 464l4 7M1481 466l5-7M1479 474.500h7M1500 454.500h7M1510 457l2-3M1518 462l4 6M1511 490l3 6M1521 495.500h6M1509 501l2-3M1540 517h3" stroke="#e01878" />
  </svg>
);

const Grip = ({ vertical }: { vertical?: boolean }) => (
  <svg width="10" height="10" viewBox="0 0 10 10" aria-hidden="true">
    <path d={vertical ? "M0 1.500h10M0 5.500h10M0 9.500h10" : "M1.500 0v10M5.500 0v10M9.500 0v10"} stroke="#666" />
  </svg>
);

/* ---------- data ---------- */

const tabs = ["Home", "Insert", "Annotate", "Analyze", "Structure", "Massing & Site", "Collaborate", "View", "Manage"];

type Layer = { fn: string; material: string; thickness: string; tone: Tone; wraps?: boolean };
const layers: Layer[] = [
  { fn: "Substrate [2]", material: "Stone", thickness: "0.1000", tone: "selected", wraps: true },
  { fn: "Core Boundary", material: "Layers Above", thickness: "0.0000", tone: "core" },
  { fn: "Substrate [2]", material: "Concrete_03", thickness: "0.1000", tone: "plain", wraps: false },
  { fn: "Substrate [2]", material: "Block", thickness: "0.1000", tone: "plain", wraps: false },
  { fn: "Core Boundary", material: "Layers Below", thickness: "0.0000", tone: "core" },
  { fn: "Finish 1 [4]", material: "Plaster", thickness: "0.0500", tone: "plain", wraps: true },
];

type Node =
  | { kind: "root"; icon: React.ReactNode; label: string; open?: boolean; toggle?: boolean; last?: boolean }
  | { kind: "child"; open: boolean }
  | { kind: "leaf" }
  | { kind: "blank" }
  | { kind: "space" };

const repeat = (kind: "blank" | "space", n: number): Node[] => Array.from({ length: n }, () => ({ kind }));
const nodes: Node[] = [
  { kind: "root", icon: treeIcons.views, label: "V", open: true, toggle: true },
  { kind: "child", open: true },
  ...repeat("blank", 4),
  { kind: "child", open: false },
  { kind: "child", open: true },
  ...repeat("blank", 1),
  { kind: "child", open: true },
  ...repeat("blank", 4),
  { kind: "child", open: true },
  ...repeat("space", 4),
  { kind: "root", icon: treeIcons.legends, label: "L" },
  { kind: "root", icon: treeIcons.schedules, label: "S", open: true, toggle: true },
  { kind: "leaf" },
  { kind: "root", icon: treeIcons.sheets, label: "S" },
  { kind: "root", icon: treeIcons.families, label: "F", toggle: true },
  { kind: "root", icon: treeIcons.groups, label: "G", toggle: true },
  { kind: "root", icon: treeIcons.links, label: "R", last: true },
];

const TreeNode = ({ node }: { node: Node }) => {
  if (node.kind === "root") {
    return (
      <TreeRow $guide={false} $last={node.last}>
        <Gap $w={4} />
        {node.toggle ? <Twist type="button" $open={node.open} aria-label={`Toggle ${node.label}`} /> : <Dots $w={5} $indent={4} />}
        <Dots $w={7} />
        {node.icon}
        <NodeLabel>{node.label}</NodeLabel>
      </TreeRow>
    );
  }
  return (
    <TreeRow $guide={node.kind === "child" || node.kind === "blank"}>
      {node.kind === "child" && (
        <>
          <Gap $w={24} />
          <Twist type="button" $open={node.open} aria-label="Toggle branch" />
          <Dots $w={10} />
        </>
      )}
      {node.kind === "leaf" && <Dots $w={15} $indent={28} />}
    </TreeRow>
  );
};

const taskLight = "linear-gradient(90deg, #b4c0d0, #93a3b8)";
const taskDark = "linear-gradient(90deg, #8a9bb3, #7b8da7)";
const tasks: { shade: string; art: React.ReactNode }[] = [
  { shade: taskLight, art: <path d="M2 3h18l4 4H2z" fill="#19a9e6" /> },
  { shade: taskDark, art: <circle cx="17" cy="13" r="11" stroke="#1b5c9a" fill="#bfe0f2" /> },
  { shade: taskLight, art: <circle cx="17" cy="13" r="11" stroke="#1b5c9a" fill="#bfe0f2" /> },
  { shade: taskLight, art: <path d="M2 3h11l3 4H2z" fill="#e874cf" /> },
  { shade: taskDark, art: null },
  { shade: taskLight, art: <circle cx="22" cy="12" r="10" fill="#7b828c" /> },
  { shade: taskLight, art: <path d="M2 7l4-4h26v5H2z" fill="#f4f8ff" stroke="#2559a8" /> },
  { shade: taskLight, art: <circle cx="5" cy="8" r="5" fill="#8a8f96" /> },
  { shade: taskLight, art: <circle cx="7" cy="7" r="4" fill="#f0922a" /> },
  { shade: taskLight, art: <path d="M1 3h32v5H1z" fill="#f5b25c" stroke="#c66a10" /> },
];

/* ---------- sections ---------- */

const Quick = () => {
  const q = quickIcons;
  return (
    <QuickBar>
      <Slot $w={32} aria-label="Open">{q.open}</Slot>
      <Slot $w={28} aria-label="Save">{q.save}</Slot>
      <Slot $w={32} aria-label="Synchronize">{q.sync}</Slot>
      <Slot $w={14} aria-label="Synchronize options"><Caret /></Slot>
      <Slot $w={30} aria-label="Undo">{q.undo}</Slot>
      <Slot $w={14} aria-label="Undo history"><Caret /></Slot>
      <Slot $w={30} aria-label="Redo">{q.redo}</Slot>
      <Slot $w={16} aria-label="Redo history"><Caret /></Slot>
      <Divider $w={10} />
      <Slot $w={28} aria-label="Measure">{q.measure}</Slot>
      <Slot $w={18} aria-label="Measure options"><Caret /></Slot>
      <Slot $w={26} aria-label="Aligned dimension">{q.dimension}</Slot>
      <Slot $w={34} aria-label="Tag by category">{q.tag}</Slot>
      <Slot $w={26} aria-label="Text">{q.textTool}</Slot>
      <Divider $w={14} />
      <Slot $w={24} aria-label="Default 3D view">{q.house}</Slot>
      <Slot $w={22} aria-label="3D view options"><Caret /></Slot>
      <Slot $w={24} aria-label="Section">{q.section}</Slot>
      <ActiveSlot $w={30} aria-label="Thin lines" aria-pressed="true">{q.thinLines}</ActiveSlot>
      <Divider $w={8} />
      <Slot $w={28} aria-label="Close hidden windows" disabled>{q.closeHidden}</Slot>
      <Slot $w={32} aria-label="Switch windows">{q.switchWindows}</Slot>
      <Slot $w={10} aria-label="Window list"><Caret /></Slot>
      <Slot $w={24} aria-label="Customize toolbar">{q.customize}</Slot>
      <FileName>TemplateFile_Jamal_02.rte</FileName>
      <Slot $w={18} aria-label="Toggle search">{q.searchToggle}</Slot>
      <Search placeholder="Type a keyword or phrase" aria-label="Search" />
      <Slot $w={30} aria-label="Find">{q.binoculars}</Slot>
      <Slot $w={30} aria-label="Subscription">{q.key}</Slot>
      <Slot $w={29} aria-label="Communication center">{q.dish}</Slot>
      <Slot $w={30} aria-label="Favorites">{q.star}</Slot>
      <Slot $w={30} aria-label="Account">{q.person}</Slot>
      <SignIn>Sign In<Caret /></SignIn>
      <Divider $w={5} />
      <Slot $w={38} aria-label="Help">{q.help}</Slot>
      <Slot $w={10} aria-label="Help options"><Caret /></Slot>
      <Gap $w={18} />
    </QuickBar>
  );
};

const RibbonPanels = () => {
  const r = ribbonIcons;
  const caret = <Caret color="#8a8a8a" />;
  return (
    <Ribbon>
      <Panel $w={61}>
        <PanelTools>
          <ModifyTool $w={54}>{r.cursor}Modify</ModifyTool>
        </PanelTools>
        <PanelTitle>Select</PanelTitle>
      </Panel>
      <Panel $w={80}>
        <PanelTools>
          <BigStack $w={78}>
            <BigTool aria-label="Family types">{r.families}</BigTool>
            <BigTool aria-label="Properties">{r.properties}</BigTool>
          </BigStack>
        </PanelTools>
        <PanelTitle />
      </Panel>
      <Panel $w={99}>
        <PanelTools>
          <LabelledTool $w={64}>{r.paste}Paste</LabelledTool>
          <SmallStack $w={28}>
            <SmallTool aria-label="Cut to clipboard">{r.scissors}</SmallTool>
            <SmallTool aria-label="Copy to clipboard">{r.copy}</SmallTool>
          </SmallStack>
        </PanelTools>
        <PanelTitle />
      </Panel>
      <Panel $w={173}>
        <PanelTools>
          <SmallStack $w={91}>
            <SmallTool $start>{r.cope}<span>Cope</span>{caret}</SmallTool>
            <SmallTool $start>{r.cut}<span>Cut</span>{caret}</SmallTool>
          </SmallStack>
          <SmallStack $w={28}>
            <SmallTool aria-label="Join geometry">{r.joinEnd}</SmallTool>
            <SmallTool aria-label="Beam joins">{r.beamJoin}</SmallTool>
          </SmallStack>
          <SmallStack $w={34}>
            <SmallTool aria-label="Wall joins">{r.wallJoin}</SmallTool>
            <SmallTool aria-label="Split face">{r.splitFace}</SmallTool>
          </SmallStack>
          <SmallStack $w={12}>
            <SmallTool disabled aria-label="Wall join options" />
            <SmallTool aria-label="Split face options">{caret}</SmallTool>
          </SmallStack>
        </PanelTools>
        <PanelTitle />
      </Panel>
      <Panel $w={299}>
        <PanelTools>
          <BigStack $w={48}>
            <BigTool aria-label="Align">{r.align}</BigTool>
            <BigTool aria-label="Move">{r.move}</BigTool>
          </BigStack>
          <BigStack $w={50}>
            <BigTool aria-label="Offset">{r.offset}</BigTool>
            <BigTool aria-label="Copy">{r.copyMove}</BigTool>
          </BigStack>
          <BigStack $w={50}>
            <BigTool aria-label="Mirror, pick axis">{r.mirrorPick}</BigTool>
            <BigTool aria-label="Rotate">{r.rotate}</BigTool>
          </BigStack>
          <BigStack $w={50}>
            <BigTool aria-label="Mirror, draw axis">{r.mirrorDraw}</BigTool>
            <BigTool aria-label="Trim">{r.trim}</BigTool>
          </BigStack>
          <SmallStack $w={34}>
            <SmallTool aria-label="Split element">{r.split}</SmallTool>
            <SmallTool aria-label="Array">{r.array}</SmallTool>
          </SmallStack>
          <SmallStack $w={30}>
            <SmallTool aria-label="Split with gap">{r.splitGap}</SmallTool>
            <SmallTool aria-label="Scale">{r.scale}</SmallTool>
          </SmallStack>
          <SmallStack $w={32}>
            <SmallTool aria-label="Unpin">{r.unpin}</SmallTool>
            <SmallTool aria-label="Pin">{r.pin}</SmallTool>
          </SmallStack>
        </PanelTools>
        <PanelTitle />
      </Panel>
      <Panel $w={51}>
        <PanelTools>
          <SmallStack $w={32}>
            <SmallTool aria-label="Hide in view">{r.bulb}</SmallTool>
            <SmallTool aria-label="Override graphics">{r.brush}</SmallTool>
          </SmallStack>
          <SmallStack $w={10}>
            <SmallTool aria-label="Hide options">{caret}</SmallTool>
            <SmallTool aria-label="Override options">{caret}</SmallTool>
          </SmallStack>
        </PanelTools>
        <PanelTitle />
      </Panel>
      <Panel $w={70}>
        <PanelTools>
          <BigStack $w={50}>
            <BigTool aria-label="Measure between references">{r.ruler}</BigTool>
            <BigTool aria-label="Dimension">{r.alignedDim}</BigTool>
          </BigStack>
          <BigStack $w={14}>
            <BigTool aria-label="Measure list">{caret}</BigTool>
          </BigStack>
        </PanelTools>
        <PanelTitle />
      </Panel>
      <Panel $w={102}>
        <PanelTools>
          <BigStack $w={50}>
            <BigTool aria-label="Create similar">{r.similar}</BigTool>
            <BigTool aria-label="Create parts">{r.parts}</BigTool>
          </BigStack>
          <BigStack $w={48}>
            <BigTool aria-label="Create group">{r.createGroup}</BigTool>
            <BigTool aria-label="Create assembly">{r.assembly}</BigTool>
          </BigStack>
        </PanelTools>
        <PanelTitle />
      </Panel>
      <ContextEdge />
      <Panel $w={103} $contextual>
        <PanelTools>
          <LabelledTool $w={51}>{r.editProfile}{"Edit\nProfile"}</LabelledTool>
          <LabelledTool $w={50}>{r.resetProfile}{"Reset\nProfile"}</LabelledTool>
        </PanelTools>
        <PanelTitle $green>Mode</PanelTitle>
      </Panel>
      <Panel $w={211} $contextual>
        <PanelTools>
          <LabelledTool $w={68}>{r.wallOpening}{"Wall\nOpening"}</LabelledTool>
          <LabelledTool $w={68}>{r.attach}{"Attach\nTop/Base"}</LabelledTool>
          <LabelledTool $w={72}>{r.detach}{"Detach\nTop/Base"}</LabelledTool>
        </PanelTools>
        <PanelTitle $green>Modify Wall</PanelTitle>
      </Panel>
    </Ribbon>
  );
};

const LayerGrid = () => (
  <LayerTable>
    <colgroup>
      <col width={19} />
      <col width={112} />
      <col width={111} />
      <col width={110} />
      <col width={95} />
    </colgroup>
    <thead>
      <tr>
        <HeadCell aria-label="Row" />
        <HeadCell scope="col">Function</HeadCell>
        <HeadCell scope="col">Material</HeadCell>
        <HeadCell scope="col">Thickness</HeadCell>
        <HeadCell scope="col">Wraps</HeadCell>
      </tr>
    </thead>
    <tbody>
      {layers.map((l, i) => (
        <tr key={i}>
          <NumberCell scope="row" $current={i === 0}>{i + 1}</NumberCell>
          <Cell $tone={l.tone}>{l.fn}</Cell>
          <Cell $tone={l.tone}>{l.material}</Cell>
          <Cell $tone={l.tone}>{l.thickness}</Cell>
          <Cell $tone={l.wraps === false ? "core" : l.tone}>
            {l.wraps !== undefined && (
              <Check
                type="checkbox"
                defaultChecked={l.wraps}
                disabled={!l.wraps}
                aria-label={`Wrap layer ${i + 1}`}
                $accent={l.tone === "selected" ? "#d8cc8e" : "#3d4f92"}
                $fill={l.tone === "selected" ? "#2c2a22" : "#f4f4f6"}
              />
            )}
          </Cell>
        </tr>
      ))}
      <tr>
        <FillerHead aria-label="Empty" />
        <Cell $tone="plain" />
        <Cell $tone="plain" />
        <Cell $tone="plain" />
        <Cell $tone="plain" />
      </tr>
    </tbody>
  </LayerTable>
);

const EditAssembly = () => {
  const sample = useRef<HTMLInputElement>(null);
  useEffect(() => {
    sample.current?.focus();
    sample.current?.select();
  }, []);
  return (
    <Dialog role="dialog" aria-labelledby="dialog-name">
      <DialogTitle>
        <DialogName id="dialog-name">Edit Assembly</DialogName>
        <CloseButton aria-label="Close">
          <Art w={14} h={12}>
            <path d="M2.500 2l9 8M11.500 2l-9 8" stroke="#5b3a3a" strokeWidth="4.800" />
            <path d="M2.500 2l9 8M11.500 2l-9 8" stroke="#fff" strokeWidth="3" />
          </Art>
        </CloseButton>
      </DialogTitle>
      <DialogBody onSubmit={(e) => e.preventDefault()}>
        <PreviewColumn>
          <PreviewFrame>
            <PreviewArea><WallPreview /></PreviewArea>
            <VScroll>
              <Arrow dir="up" />
              <Thumb $w={19} $h={19}><Grip vertical /></Thumb>
              <Arrow dir="down" />
            </VScroll>
            <HScroll>
              <Arrow dir="left" />
              <Thumb $w={19} $h={19}><Grip /></Thumb>
              <Arrow dir="right" />
            </HScroll>
          </PreviewFrame>
          <PreviewFooter>
            <CornerButton type="button" $w={28} aria-label="2D preview">
              <Art w={22} h={22}>
                <path d="M3 16H1V6c0-3 2-5 5-5h9v5M5 15h-2" stroke="#6a737e" />
                <path d="M12 10a4.500 4.500 0 10-7 1l3 2" stroke="#4c5560" />
                <circle cx="9" cy="8" r="2.200" stroke="#8c95a0" />
                <path d="M8 15.500c.5-2 4-2 4 .3 0 1.800-4 2.700-4 5.200h4.500M15 14.500V21h2c4.500 0 4.500-6.500 0-6.500z" stroke="#1d4f96" strokeWidth="1.800" />
              </Art>
            </CornerButton>
            <ViewLabel htmlFor="view">View:</ViewLabel>
            <Picker $w={145}>
              <PickerSelect id="view" defaultValue="floor">
                <option value="floor">Floor Plan: Modify ty</option>
              </PickerSelect>
              <Caret size={10} color="#000" />
            </Picker>
          </PreviewFooter>
        </PreviewColumn>
        <Details>
          <Info>
            <span>Family:</span>
            <InfoValue>Basic Wall</InfoValue>
            <span />
            <span>Type:</span>
            <InfoValue>30cm_Stone_Concrete_Block_02</InfoValue>
            <span />
            <span>Total thickness:</span>
            <InfoValue>0.3500</InfoValue>
            <SampleField>
              <label htmlFor="sample">Sample Height:</label>
              <SampleInput id="sample" ref={sample} defaultValue="6.0000" />
            </SampleField>
          </Info>
          <Group>
            <Legend>Layers</Legend>
            <SideLabel>EXTERIOR SIDE</SideLabel>
            <LayerGrid />
            <SideLabel>INTERIOR SIDE</SideLabel>
            <ButtonRow>
              <PushButton type="button">Insert</PushButton>
              <PushButton type="button">Delete</PushButton>
              <PushButton type="button" disabled>Up</PushButton>
              <PushButton type="button">Down</PushButton>
            </ButtonRow>
          </Group>
          <LowerGroup>
            <Legend>Default Wrapping</Legend>
            <WrapRow>
              <Field>
                <label htmlFor="inserts">At Inserts:</label>
                <Picker $w={218}>
                  <PickerSelect id="inserts" defaultValue="Both"><option>Both</option></PickerSelect>
                  <Caret size={10} color="#000" />
                </Picker>
              </Field>
              <Field>
                <label htmlFor="ends">At  Ends:</label>
                <Picker $w={215}>
                  <PickerSelect id="ends" defaultValue="None"><option>None</option></PickerSelect>
                  <Caret size={10} color="#000" />
                </Picker>
              </Field>
            </WrapRow>
          </LowerGroup>
          <LowerGroup>
            <Legend>Modify Vertical Structure (Section Preview only)</Legend>
            <VerticalGrid>
              <PushButton type="button" disabled $w={128}>Modify</PushButton>
              <PushButton type="button" disabled $w={147}>Merge Regions</PushButton>
              <PushButton type="button" disabled $w={147}>Sweeps</PushButton>
              <PushButton type="button" disabled $w={128}>Assign Layers</PushButton>
              <PushButton type="button" disabled $w={147}>Split Region</PushButton>
              <PushButton type="button" disabled $w={147}>Reveals</PushButton>
            </VerticalGrid>
          </LowerGroup>
          <Actions>
            <PushButton type="button">Preview &gt;&gt;</PushButton>
            <PushButton $primary>OK</PushButton>
            <PushButton type="button">Cancel</PushButton>
            <PushButton type="button">Help</PushButton>
          </Actions>
        </Details>
      </DialogBody>
    </Dialog>
  );
};

export default function App() {
  return (
    <Page>
      <GlobalStyle />
      <AppButton aria-label="Application menu">
        <Art w={39} h={40}>
          <path d="M2 7l13-4c7 0 9 8 4 13l6 10-4 3-7-9 1 9-5 3-4-2z" fill="#6d2459" />
          <path d="M2 7l12-3c7 0 8 7 3 11l6 11-4 1-7-10-2 1 2 12-4 1z" fill="#c06aa8" />
          <path d="M8 9l5-1c3 0 3 4-1 6l-3 1z" fill="#8e3a76" />
          <path d="M3 7l11-3" stroke="#e7b6da" />
          <path d="M29 18h7l-3.500 4z" fill="#222" />
          <path d="M31 38l3-7 3 7M32 36h4" stroke="#222" />
        </Art>
      </AppButton>
      <Quick />
      <TabStrip>
        {tabs.map((t) => <Tab key={t}>{t}</Tab>)}
        <Tab $active>Modify | Walls</Tab>
        <TabToggle aria-label="Minimize ribbon">
          <Art w={18} h={11}>
            <rect x=".7" y=".7" width="16" height="9" rx="3" fill="#e2e2e2" stroke="#5f5f5f" />
            <path d="M5 7.500h7L8.500 3.500z" fill="#444" />
          </Art>
          <Caret />
        </TabToggle>
      </TabStrip>
      <RibbonPanels />
      <OptionsBar>Modify</OptionsBar>
      <Workspace>
        <Browser>
          <BrowserTitle>Templa</BrowserTitle>
          <Tree>{nodes.map((n, i) => <TreeNode key={i} node={n} />)}</Tree>
          <BrowserScroll>
            <Arrow dir="left" />
            <Thumb $w={22} $h={18}><Grip /></Thumb>
          </BrowserScroll>
        </Browser>
        <DocumentArea>
          <DocumentTitle />
          <Canvas><SectionDrawing /></Canvas>
        </DocumentArea>
      </Workspace>
      <StatusBar>
        <Ready>Ready</Ready>
        <ModelPicker>
          <ModelSelect aria-label="Active design option" disabled defaultValue="Main Model"><option>Main Model</option></ModelSelect>
          <Caret size={10} color="#6b6b6b" />
        </ModelPicker>
        <DragOption>
          <Check type="checkbox" defaultChecked $accent="#2f9a1c" $fill="#fff" $size={14} />
          Press &amp; Drag
        </DragOption>
        <FilterCount aria-label="Filter, 1 selected">
          <Art w={18} h={16}>
            <path d="M1 1h15l-5.500 7v6l-3-1.500V8z" fill="#d8d8df" stroke="#4a4a55" />
          </Art>
          <span>:1</span>
        </FilterCount>
      </StatusBar>
      <Taskbar>
        <StartOrb aria-label="Start" />
        {tasks.map((t, i) => (
          <TaskButton key={i} $shade={t.shade} aria-label={`Window ${i + 1}`}>
            <Art w={36} h={10}>{t.art}</Art>
          </TaskButton>
        ))}
      </Taskbar>
      <EditAssembly />
    </Page>
  );
}
